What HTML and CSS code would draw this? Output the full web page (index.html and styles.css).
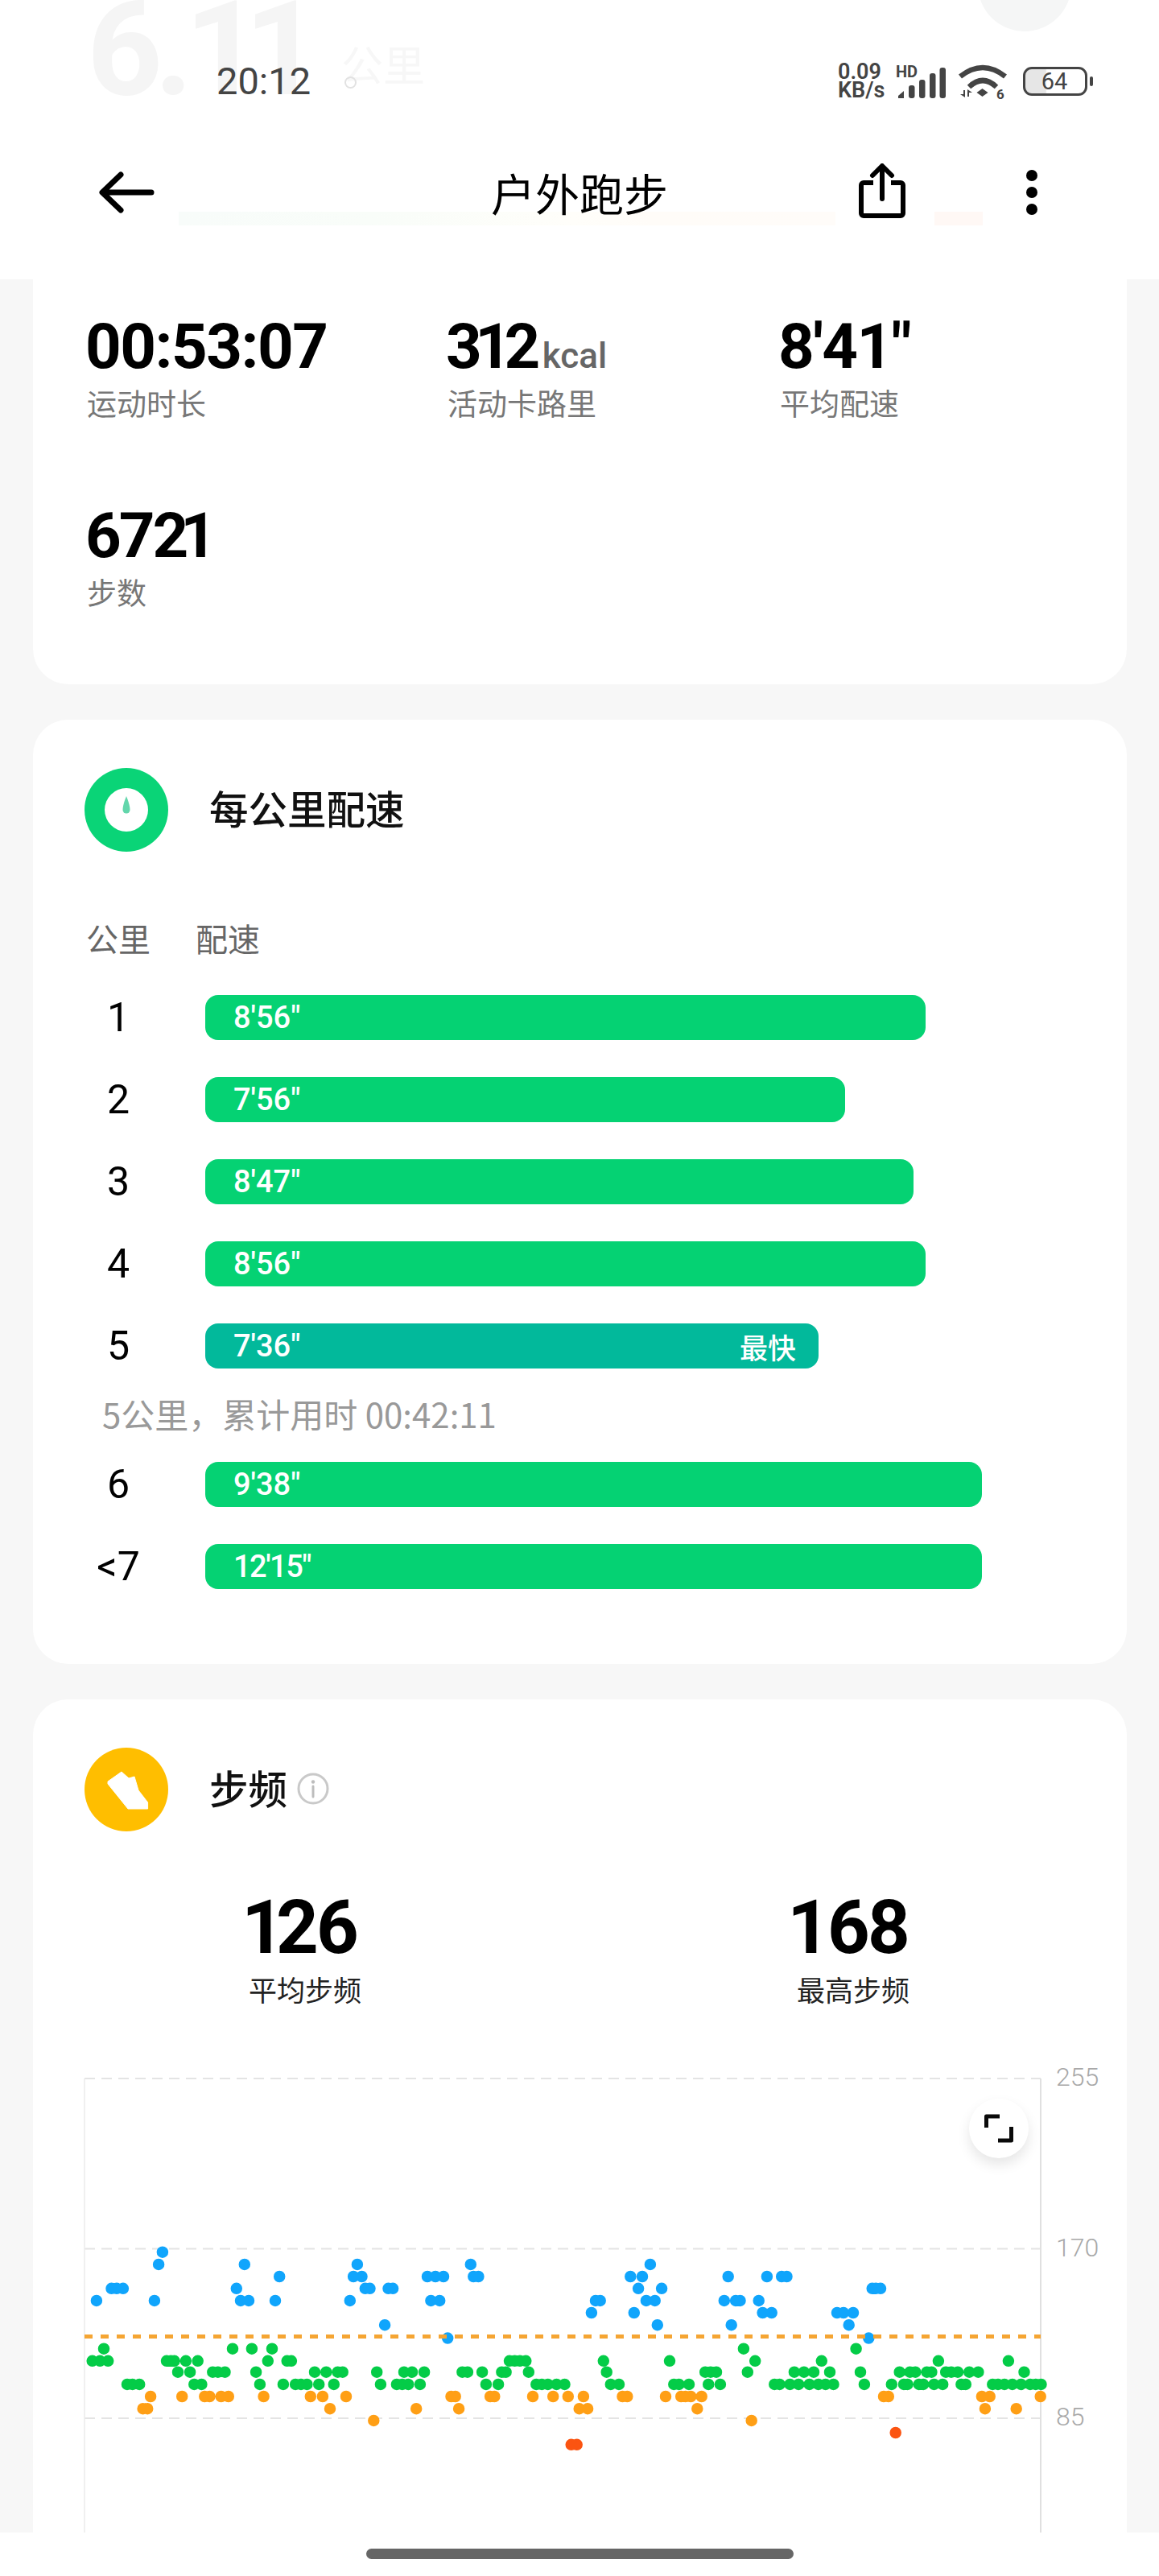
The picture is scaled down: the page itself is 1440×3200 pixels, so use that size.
FILE: index.html
```html
<!DOCTYPE html>
<html lang="zh">
<head>
<meta charset="utf-8">
<title>户外跑步</title>
<link rel="stylesheet" href="styles.css">
</head>
<body>
<div class="screen">
  <main class="page">
    <section class="card card-summary">
      <div class="stats-grid">
        <div class="stat"><div class="stat-value">00:53:07</div><div class="stat-label">运动时长</div></div>
        <div class="stat"><div class="stat-value">3<span class="n1">1</span>2<span class="stat-unit">kcal</span></div><div class="stat-label">活动卡路里</div></div>
        <div class="stat"><div class="stat-value">8'41"</div><div class="stat-label">平均配速</div></div>
        <div class="stat"><div class="stat-value stat-value-tight">672<span class="n1">1</span></div><div class="stat-label">步数</div></div>
      </div>
    </section>

    <section class="card card-pace">
      <div class="card-head">
        <svg class="head-icon" viewBox="0 0 104 104"><circle cx="52" cy="52" r="52" fill="#0ad477"/><circle cx="52" cy="52" r="27" fill="#fff"/><path d="M52 35c2 5 4.500 12 4.500 17a4.500 4.500 0 0 1-9 0c0-5 2.500-12 4.500-17z" fill="#62d6ab"/></svg>
        <h2 class="card-title">每公里配速</h2>
      </div>
      <div class="pace-head"><span>公里</span><span>配速</span></div>
      <div class="pace-list">
        <div class="pace-row"><span class="pace-km">1</span><div class="pace-bar" style="width:895px"><span>8'56"</span></div></div>
        <div class="pace-row"><span class="pace-km">2</span><div class="pace-bar" style="width:795px"><span>7'56"</span></div></div>
        <div class="pace-row"><span class="pace-km">3</span><div class="pace-bar" style="width:880px"><span>8'47"</span></div></div>
        <div class="pace-row"><span class="pace-km">4</span><div class="pace-bar" style="width:895px"><span>8'56"</span></div></div>
        <div class="pace-row"><span class="pace-km">5</span><div class="pace-bar pace-bar-best" style="width:762px"><span>7'36"</span><span class="pace-best">最快</span></div></div>
        <div class="pace-note">5公里，累计用时 00:42:11</div>
        <div class="pace-row"><span class="pace-km">6</span><div class="pace-bar" style="width:965px"><span>9'38"</span></div></div>
        <div class="pace-row"><span class="pace-km">&lt;7</span><div class="pace-bar" style="width:965px"><span class="pace-tight">12'15"</span></div></div>
      </div>
    </section>

    <section class="card card-cadence">
      <div class="card-head">
        <svg class="head-icon" viewBox="0 0 104 104"><circle cx="52" cy="52" r="52" fill="#ffbe00"/><path d="M29 42 46 30l9 8 7-2 5 17 11.600 15v8H54L29 45z" fill="#fff" stroke="#fff" stroke-width="1" stroke-linejoin="round"/></svg>
        <h2 class="card-title">步频</h2>
        <svg class="info-icon" viewBox="0 0 40 40"><circle cx="20" cy="20" r="18" fill="none" stroke="#c9c9c9" stroke-width="3"/><circle cx="20" cy="11.500" r="2.200" fill="#bdbdbd"/><path d="M20 17v13" stroke="#bdbdbd" stroke-width="3" stroke-linecap="round"/></svg>
      </div>
      <div class="cadence-stats">
        <div class="cadence-stat"><div class="cadence-value cadence-value-first"><span class="n1">1</span>26</div><div class="cadence-label">平均步频</div></div>
        <div class="cadence-stat"><div class="cadence-value">168</div><div class="cadence-label">最高步频</div></div>
      </div>
      <div class="chart">
        <svg class="chart-svg" viewBox="41 2560 1359 590">
          <path class="grid-line" d="M105 2581H1293M105 2792.500H1293M105 3003H1293"/>
          <path class="axis-left" d="M105 2581V3150"/>
          <path class="axis-right" d="M1293 2581V3150"/>
          <text class="axis-text" x="1312" y="2590">255</text>
          <text class="axis-text" x="1312" y="2802">170</text>
          <text class="axis-text" x="1312" y="3012">85</text>
          <path class="dot dot-blue" d="M201.900 2796.700h0M197.100 2811.900h0M303.800 2811.900h0M443.900 2811.900h0M584.800 2811.900h0M807.900 2811.900h0
            M347.200 2827h0M439.100 2827h0M449.500 2827h0M531 2827h0M541 2827h0M551 2827h0M588.300 2827h0M594.400 2827h0M783.300 2827h0M798 2827h0M904.700 2827h0M952.900 2827h0M971.200 2827h0M977.500 2827h0
            M138.500 2841.800h0M145 2841.800h0M152.900 2841.800h0M293.800 2841.800h0M453.800 2841.800h0M459.500 2841.800h0M482.500 2841.800h0M488.100 2841.800h0M793.100 2841.800h0M822.100 2841.800h0M1083.700 2841.800h0M1088.200 2841.800h0M1094 2841.800h0
            M119.900 2856.900h0M191.900 2856.900h0M299 2856.900h0M309 2856.900h0M342 2856.900h0M434.800 2856.900h0M535.400 2856.900h0M546.200 2856.900h0M740 2856.900h0M745.700 2856.900h0M802.900 2856.900h0M813.700 2856.900h0M899.800 2856.900h0M914.100 2856.900h0M919.500 2856.900h0M942.700 2856.900h0
            M734.900 2872h0M787.800 2872h0M947.600 2872h0M958.700 2872h0M1040 2872h0M1048 2872h0M1060 2872h0
            M478.100 2887.200h0M816.800 2887.200h0M908.700 2887.200h0M1054.700 2887.200h0
            M556.200 2903.600h0M1079.300 2903.600h0"/>
          <path class="dot dot-green" d="M129 2916.700h0M289 2916.700h0M312.900 2916.700h0M338 2916.700h0M923.900 2916.700h0M1063.600 2916.700h0
            M114.700 2931.800h0M124.200 2931.800h0M134.200 2931.800h0M207 2931.800h0M212.300 2931.800h0M216.600 2931.800h0M230.900 2931.800h0M245.700 2931.800h0M332.800 2931.800h0M356.700 2931.800h0M361.900 2931.800h0M633 2931.800h0M639.500 2931.800h0M646 2931.800h0M653.300 2931.800h0M749.800 2931.800h0M832 2931.800h0M938.200 2931.800h0M1020.800 2931.800h0M1165.900 2931.800h0M1252.900 2931.800h0
            M221 2945.700h0M236.100 2945.700h0M264.300 2945.700h0M270.800 2945.700h0M279.500 2945.700h0M318.100 2945.700h0M391 2945.700h0M405.300 2945.700h0M419.600 2945.700h0M425.700 2945.700h0M468.200 2945.700h0M502 2945.700h0M512 2945.700h0M527.100 2945.700h0M574.400 2945.700h0M580.900 2945.700h0M599.100 2945.700h0M623.400 2945.700h0M628.600 2945.700h0M656.800 2945.700h0M753.700 2945.700h0M876.200 2945.700h0M882.900 2945.700h0M890 2945.700h0M928.800 2945.700h0M986.900 2945.700h0M998.900 2945.700h0M1011 2945.700h0M1031 2945.700h0M1069 2945.700h0M1117.700 2945.700h0M1130.600 2945.700h0M1137.300 2945.700h0M1151.600 2945.700h0M1157.400 2945.700h0M1175.200 2945.700h0M1181.900 2945.700h0M1190 2945.700h0M1204.300 2945.700h0M1215.400 2945.700h0M1272.500 2945.700h0
            M158 2960.900h0M164.600 2960.900h0M173.200 2960.900h0M241.300 2960.900h0M250.400 2960.900h0M322.900 2960.900h0M351.900 2960.900h0M367.100 2960.900h0M374 2960.900h0M381.400 2960.900h0M396.200 2960.900h0M414.800 2960.900h0M472.900 2960.900h0M492.900 2960.900h0M499.800 2960.900h0M507.200 2960.900h0M521.900 2960.900h0M603.900 2960.900h0M619.100 2960.900h0M666.300 2960.900h0M673.200 2960.900h0M680.700 2960.900h0M691.500 2960.900h0M701.500 2960.900h0M758.800 2960.900h0M769 2960.900h0M837.300 2960.900h0M843.600 2960.900h0M856 2960.900h0M880.200 2960.900h0M894.900 2960.900h0M962.300 2960.900h0M968.600 2960.900h0M981.500 2960.900h0M992.200 2960.900h0M1005.600 2960.900h0M1016.800 2960.900h0M1025.700 2960.900h0M1035.500 2960.900h0M1073.900 2960.900h0M1107.800 2960.900h0M1123 2960.900h0M1127.500 2960.900h0M1141.800 2960.900h0M1147.100 2960.900h0M1160.500 2960.900h0M1171.200 2960.900h0M1194.400 2960.900h0M1199.800 2960.900h0M1233.300 2960.900h0M1240 2960.900h0M1248 2960.900h0M1257.800 2960.900h0M1268.500 2960.900h0M1280 2960.900h0M1286.800 2960.900h0M1293.500 2960.900h0"/>
          <path class="dot dot-orange" d="M187.100 2976h0M226.200 2976h0M254.300 2976h0M260.400 2976h0M274.700 2976h0M283.800 2976h0M327.600 2976h0M385.800 2976h0M400.900 2976h0M430 2976h0M560.500 2976h0M565.700 2976h0M609.100 2976h0M614.300 2976h0M662 2976h0M687.200 2976h0M705.800 2976h0M724.900 2976h0M773.500 2976h0M779.300 2976h0M827 2976h0M846.200 2976h0M851.600 2976h0M858.300 2976h0M871.700 2976h0M1098 2976h0M1103.800 2976h0M1219.900 2976h0M1229.700 2976h0M1292.700 2976h0
            M177.600 2991.200h0M183.200 2991.200h0M410 2991.200h0M517.200 2991.200h0M570.100 2991.200h0M719.700 2991.200h0M730.100 2991.200h0M866.300 2991.200h0M1223.900 2991.200h0M1262.700 2991.200h0
            M464.300 3005.900h0M933.700 3005.900h0"/>
          <path class="dot dot-red" d="M709.700 3035.800h0M716.700 3035.800h0M1112.700 3021h0"/>
          <path class="avg-line" d="M105 2901.500H1293"/>
        </svg>
        <button class="expand-btn" type="button" aria-label="全屏">
          <svg viewBox="0 0 36 36" width="36" height="36"><path d="M2.500 17V3H19M33.500 16V33H17" fill="none" stroke="#0a0a0a" stroke-width="5" stroke-linejoin="round"/></svg>
        </button>
      </div>
    </section>
  </main>

  <header class="topbar">
    <div class="ghost ghost-number">6.<span class="ghost-one">1</span>1</div>
    <div class="ghost ghost-unit">公里</div>
    <div class="ghost ghost-ring"></div>
    <div class="ghost ghost-circle"></div>
    <div class="ghost ghost-strip"></div>
    <div class="ghost ghost-strip-end"></div>
    <div class="status">
      <span class="status-time">20:12</span>
      <div class="status-icons">
        <div class="speed"><span>0.09</span><span>KB/s</span></div>
        <div class="signal">
          <span class="hd">HD</span>
          <svg viewBox="0 0 60 38" width="60" height="38"><path d="M1 38v-3l7-6v9z" fill="#444"/><rect x="14" y="22" width="7.500" height="16" rx="3" fill="#444"/><rect x="27" y="15" width="7.500" height="23" rx="3" fill="#444"/><rect x="40" y="7" width="7.500" height="31" rx="3" fill="#444"/><rect x="52.500" y="0" width="7.500" height="38" rx="3" fill="#444"/></svg>
        </div>
        <svg class="wifi" viewBox="0 0 60 45" width="60" height="45"><path d="M2 16Q30-6 58 16" fill="none" stroke="#444" stroke-width="6.500"/><path d="M13 29Q30 13 47 29" fill="none" stroke="#444" stroke-width="6.500"/><path d="M29.500 31l7 5-7 5-7-5z" fill="#444"/><path d="M2 38h4v-5l2 0v9zM17 36h-4v5h-2v-9z" fill="#444"/><text class="wifi-six" x="47" y="44">6</text></svg>
        <div class="battery"><div class="battery-body"><span class="battery-num">64</span></div><div class="battery-nub"></div></div>
      </div>
    </div>
    <nav class="navbar">
      <div class="nav-left">
        <svg viewBox="0 0 72 52" width="72" height="52"><path d="M66 26H6M28 4 5 26l23 22" fill="none" stroke="#000" stroke-width="7" stroke-linecap="round" stroke-linejoin="round"/></svg>
      </div>
      <h1 class="nav-title">户外跑步</h1>
      <div class="nav-right">
        <svg class="nav-share" viewBox="0 0 58 68" width="58" height="68"><path d="M18 24H6a3 3 0 0 0-3 3v35a3 3 0 0 0 3 3h46a3 3 0 0 0 3-3V27a3 3 0 0 0-3-3H40" fill="none" stroke="#000" stroke-width="6"/><path d="M29 44V4M17 15 29 3l12 12" fill="none" stroke="#000" stroke-width="6" stroke-linecap="round" stroke-linejoin="round"/></svg>
        <svg viewBox="0 0 14 56" width="14" height="56"><circle cx="7" cy="7" r="7"/><circle cx="7" cy="28" r="7"/><circle cx="7" cy="49" r="7"/></svg>
      </div>
    </nav>
  </header>

  <footer class="home-area"><div class="home-bar"></div></footer>
</div>
</body>
</html>
```

FILE: styles.css
```css
* { box-sizing: border-box; }
html, body { margin: 0; padding: 0; }
body {
  background: #f7f7f7;
  font-family: "Roboto", "Noto Sans CJK SC", sans-serif;
  color: #000;
}
.screen { position: relative; width: 1440px; height: 3200px; overflow: hidden; }
.page { padding: 300px 40px 0 41px; }
.card { background: #fff; border-radius: 44px; }
.card + .card { margin-top: 44px; }

.card-summary { padding: 91px 0 93px 67px; }
.stats-grid { display: grid; grid-template-columns: 448px 413px 1fr; row-gap: 104px; }
.stat-value { font-size: 78px; line-height: 80px; font-weight: 700; letter-spacing: -1.500px; margin: 0 0 7px -2px; white-space: nowrap; }
.stat-value-tight { letter-spacing: -3px; }
.stat-unit { font-size: 44px; line-height: 0; font-weight: 500; color: #666; letter-spacing: 0; margin-left: 4px; }
.n1 { margin: 0 -7px; }
.stat-label { font-family: "Noto Sans CJK SC", sans-serif; font-size: 37px; line-height: 44px; color: #777; font-weight: 400; }

.card-pace { padding: 60px 0 93px 0; }
.card-head { display: flex; align-items: center; padding-left: 64px; height: 104px; }
.head-icon { width: 104px; height: 104px; display: block; flex: none; }
.card-title { margin: -6px 0 0 51px; font-family: "Noto Sans CJK SC", sans-serif; font-size: 48.500px; font-weight: 500; color: #111; line-height: 60px; }
.info-icon { width: 40px; height: 40px; margin: -2px 0 0 12px; }

.pace-head { display: flex; gap: 56px; margin: 84px 0 0 66px; font-family: "Noto Sans CJK SC", sans-serif; font-size: 40px; line-height: 46px; color: #666; }
.pace-list { display: flex; flex-direction: column; margin: 48px 0 0 66px; gap: 46px; }
.pace-row { display: flex; align-items: center; height: 56px; }
.pace-km { width: 80px; text-align: center; font-size: 50px; line-height: 56px; color: #000; flex: none; }
.pace-bar { margin-left: 68px; height: 56px; border-radius: 16px; background: #05d273; display: flex; align-items: center; justify-content: space-between; padding: 0 28px 0 35px; color: #fff; font-size: 38px; font-weight: 500; }
.pace-bar-best { background: #02b99b; }
.pace-best { font-family: "Noto Sans CJK SC", sans-serif; font-size: 35px; font-weight: 500; }
.pace-tight { letter-spacing: -1.500px; }
.pace-note { margin: -12px 0 -8px 20px; font-family: "Noto Sans CJK SC", sans-serif; font-size: 42px; line-height: 44px; color: #999; }

.card-cadence { padding-top: 60px; border-radius: 44px 44px 0 0; }
.cadence-stats { display: flex; margin-top: 74px; padding-right: 7px; }
.cadence-stat { flex: 1; text-align: center; }
.cadence-stat + .cadence-stat .cadence-label { padding-left: 10px; }
.cadence-stat + .cadence-stat .cadence-value { padding-right: 4px; }
.cadence-value { font-size: 92px; line-height: 92px; font-weight: 700; letter-spacing: -3px; margin-bottom: 8px; }
.cadence-value-first { padding-right: 8px; }
.cadence-label { font-family: "Noto Sans CJK SC", sans-serif; font-size: 35px; line-height: 44px; color: #222; }

.chart { position: relative; margin-top: 68px; }
.chart-svg { display: block; width: 1359px; height: 590px; }
.grid-line { fill: none; stroke: #e4e4e4; stroke-width: 2; stroke-dasharray: 13 8; }
.axis-left { stroke: #ebebeb; stroke-width: 1.500; }
.axis-right { stroke: #e0e0e0; stroke-width: 2; }
.axis-text { font-family: "Roboto", sans-serif; font-size: 32px; font-weight: 300; fill: #a8a8a8; }
.dot { fill: none; stroke-width: 14.500; stroke-linecap: round; }
.dot-blue { stroke: #10a5fc; }
.dot-green { stroke: #04cc47; }
.dot-orange { stroke: #ff9f15; }
.dot-red { stroke: #fb5411; }
.avg-line { fill: none; stroke: #f5a533; stroke-width: 5; stroke-dasharray: 10 10; }
.expand-btn {
  position: absolute; left: 1163px; top: 46px; width: 74px; height: 74px; padding: 0;
  border: 0; border-radius: 50%; background: #fff;
  box-shadow: 0 8px 16px rgba(0, 0, 0, .10);
  display: flex; align-items: center; justify-content: center;
}

.topbar { position: absolute; left: 0; top: 0; width: 1440px; height: 347px; background: #fff; padding-top: 79px; overflow: hidden; }
.ghost { position: absolute; }
.ghost-number { left: 108px; top: -21px; font-size: 164px; line-height: 164px; font-weight: 700; letter-spacing: -10px; color: #f5f5f5; }
.ghost-one { margin-right: -10px; }
.ghost-unit { left: 424px; top: 44px; font-family: "Noto Sans CJK SC", sans-serif; font-size: 52px; line-height: 70px; color: #f7f7f7; }
.ghost-ring { left: 428px; top: 95px; width: 15px; height: 15px; border: 2px solid #e2e2e2; border-radius: 50%; }
.ghost-circle { left: 1215px; top: -77px; width: 116px; height: 116px; border-radius: 50%; background: #f5f6f6; }
.ghost-strip { left: 222px; top: 263px; width: 816px; height: 17px; background: linear-gradient(90deg, #f8fcfa, #f9fdf9 30%, #fffefa 60%, #fffcf8 72%, #fffcf9); }
.ghost-strip-end { left: 1161px; top: 263px; width: 60px; height: 17px; background: #fff8f5; }

.status { position: relative; display: flex; align-items: center; height: 44px; padding: 0 82px 0 269px; }
.status-time { font-size: 47px; line-height: 44px; color: #444; }
.status-icons { margin-left: auto; display: flex; align-items: center; }
.speed { display: flex; flex-direction: column; width: 70px; font-size: 27px; line-height: 23px; font-weight: 600; color: #444; }
.signal { position: relative; width: 60px; height: 38px; margin: 3px 0 0 4px; }
.signal svg { display: block; }
.hd { position: absolute; left: -2px; top: -5px; font-size: 20px; line-height: 20px; font-weight: 700; color: #444; }
.wifi { margin-left: 16px; }
.wifi-six { font-family: "Roboto", sans-serif; font-size: 17px; font-weight: 700; fill: #444; }
.battery { display: flex; align-items: center; margin-left: 20px; }
.battery-body { width: 80px; height: 36px; border: 3.500px solid #444; border-radius: 11px; display: flex; align-items: center; justify-content: center; background: linear-gradient(90deg, #e6e6e6, #e6e6e6 34%, #fff 36%); background-clip: padding-box; padding-right: 2px; }
.battery-num { font-size: 29px; line-height: 30px; color: #444; }
.battery-nub { width: 4px; height: 12px; margin-left: 3px; background: #444; border-radius: 2px; }

.navbar { position: relative; display: grid; grid-template-columns: 1fr auto 1fr; align-items: center; margin-top: 82px; height: 67px; }
.nav-left { padding-left: 122px; display: flex; }
.nav-title { margin: -1px 0 0; font-family: "Noto Sans CJK SC", sans-serif; font-size: 55px; line-height: 67px; font-weight: 400; color: #000; }
.nav-right { display: flex; align-items: center; justify-content: flex-end; gap: 150px; padding-right: 151px; }
.nav-share { margin-top: -3px; }

.home-area { position: absolute; left: 0; top: 3146px; width: 1440px; height: 54px; background: #fff; display: flex; justify-content: center; padding-top: 20px; }
.home-bar { width: 531px; height: 13px; border-radius: 7px; background: #666; }
```
